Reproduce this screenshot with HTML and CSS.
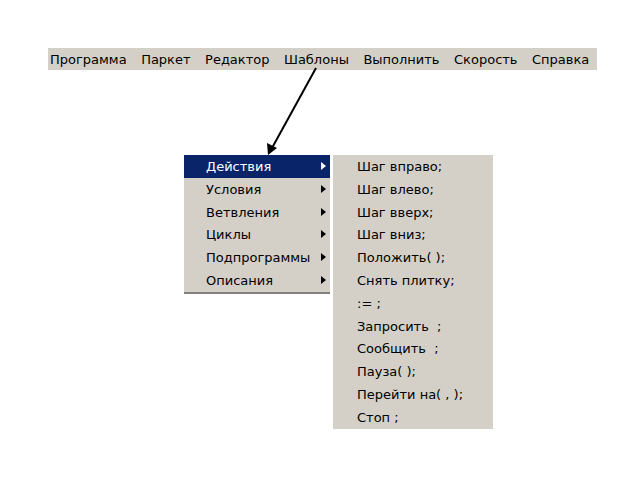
FILE: index.html
```html
<!DOCTYPE html>
<html lang="ru">
<head>
  <meta charset="UTF-8" />
  <title>Меню шаблонов</title>
  <link rel="stylesheet" href="styles.css">
</head>
<body>
  <div class="page">
    <div class="menubar">
      <span class="mb-item">Программа</span>
      <span class="mb-item">Паркет</span>
      <span class="mb-item">Редактор</span>
      <span class="mb-item">Шаблоны</span>
      <span class="mb-item">Выполнить</span>
      <span class="mb-item">Скорость</span>
      <span class="mb-item">Справка</span>
    </div>

    <svg class="pointer" width="640" height="160" viewBox="0 40 640 160">
      <line x1="316" y1="68" x2="272" y2="148" stroke="#000" stroke-width="2" />
      <polygon points="268,155 267,143 277,148" fill="#000" />
    </svg>

    <div class="menus">
      <div class="menu">
        <div class="item active">Действия<span class="tri"></span></div>
        <div class="item">Условия<span class="tri"></span></div>
        <div class="item">Ветвления<span class="tri"></span></div>
        <div class="item">Циклы<span class="tri"></span></div>
        <div class="item">Подпрограммы<span class="tri"></span></div>
        <div class="item">Описания<span class="tri"></span></div>
      </div>
      <div class="submenu">
        <div class="item">Шаг вправо;</div>
        <div class="item">Шаг влево;</div>
        <div class="item">Шаг вверх;</div>
        <div class="item">Шаг вниз;</div>
        <div class="item">Положить( );</div>
        <div class="item">Снять плитку;</div>
        <div class="item">:= ;</div>
        <div class="item">Запросить&nbsp; ;</div>
        <div class="item">Сообщить&nbsp; ;</div>
        <div class="item">Пауза( );</div>
        <div class="item">Перейти на( , );</div>
        <div class="item">Стоп ;</div>
      </div>
    </div>
  </div>
</body>
</html>
```

FILE: styles.css
```css
body {
  margin: 0;
  background: #fff;
  font-family: Tahoma, 'DejaVu Sans', 'Liberation Sans', sans-serif;
  font-size: 13px;
  color: #000;
}
.page {
  position: relative;
  width: 640px;
  height: 480px;
  padding-top: 48px;
  box-sizing: border-box;
}
.menubar {
  margin-left: 48px;
  width: 549px;
  height: 22px;
  background: #d4d0c8;
  display: flex;
  align-items: center;
  gap: 14.5px;
  padding-left: 2px;
  box-sizing: border-box;
  white-space: nowrap;
}
.pointer {
  position: absolute;
  left: 0;
  top: 40px;
}
.menus {
  display: flex;
  align-items: flex-start;
  margin-top: 85px;
  margin-left: 184px;
}
.menu {
  width: 146px;
  background: #d4d0c8;
  border-bottom: 2px solid #808080;
}
.submenu {
  width: 160px;
  margin-left: 3px;
  background: #d4d0c8;
}
.item {
  position: relative;
  height: 22.8px;
  line-height: 23.6px;
  white-space: nowrap;
}
.menu .item { padding-left: 22px; }
.submenu .item { padding-left: 24px; }
.item.active {
  background: #0a246a;
  color: #fff;
}
.tri {
  position: absolute;
  right: 4px;
  top: 7px;
  width: 0;
  height: 0;
  border-top: 4px solid transparent;
  border-bottom: 4px solid transparent;
  border-left: 5px solid #000;
}
.active .tri { border-left-color: #fff; }
```
